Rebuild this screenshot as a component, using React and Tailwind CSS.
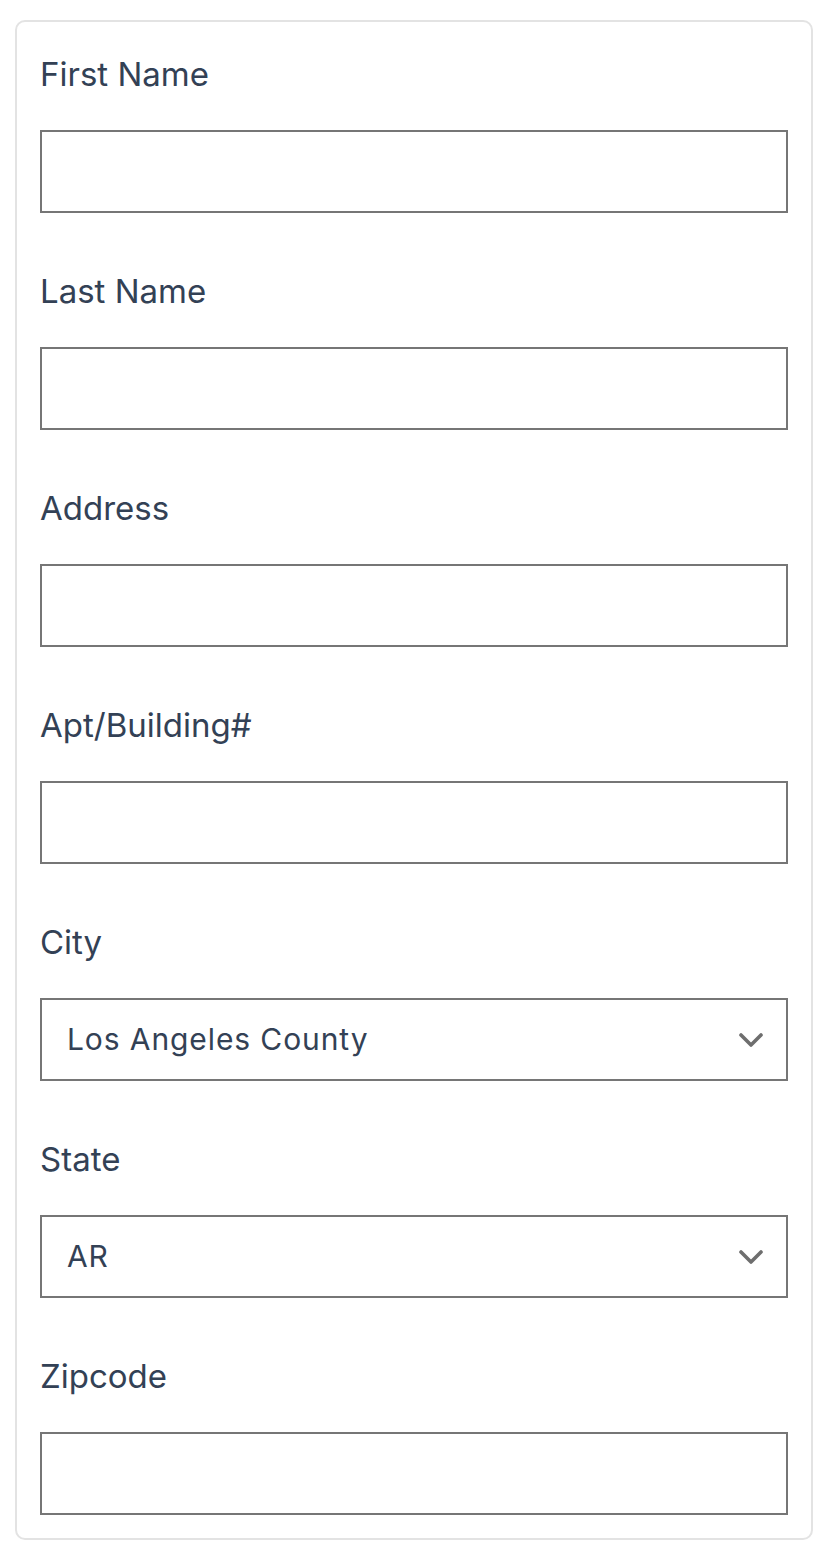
import { useState } from 'react';

const FIELDS = [
  { id: 'firstName', label: 'First Name' },
  { id: 'lastName', label: 'Last Name' },
  { id: 'address', label: 'Address' },
  { id: 'apt', label: 'Apt/Building#' },
  { id: 'city', label: 'City', options: ['Los Angeles County', 'Orange County', 'San Diego County'] },
  { id: 'state', label: 'State', options: ['AR', 'AZ', 'CA', 'NY', 'TX'] },
  { id: 'zip', label: 'Zipcode' },
];

function Chevron() {
  return (
    <svg viewBox="0 0 24 14" className="pointer-events-none absolute right-[25px] top-1/2 h-[14px] w-[24px] -translate-y-1/2" fill="none">
      <path d="M2 2l10 10L22 2" stroke="#6e6e6e" strokeWidth="3.6" strokeLinecap="round" strokeLinejoin="round" />
    </svg>
  );
}

function Field({ field, value, onChange, last }) {
  return (
    <div className={last ? '' : 'mb-[56px]'}>
      <label htmlFor={field.id} className="block text-[33px] leading-[45px] text-[#334155] mb-[33px]">
        {field.label}
      </label>
      {field.options ? (
        <div className="relative">
          <select
            id={field.id}
            value={value}
            onChange={(e) => onChange(field.id, e.target.value)}
            className="block h-[83px] w-full appearance-none rounded-none border-2 border-[#767676] bg-white pl-[25px] pr-16 text-[30px] tracking-[0.03em] text-[#334155] outline-none"
          >
            {field.options.map(o => <option key={o} value={o}>{o}</option>)}
          </select>
          <Chevron />
        </div>
      ) : (
        <input
          id={field.id}
          type="text"
          value={value}
          onChange={(e) => onChange(field.id, e.target.value)}
          className="block h-[83px] w-full rounded-none border-2 border-[#767676] bg-white px-[25px] text-[30px] text-[#334155] outline-none"
        />
      )}
    </div>
  );
}

export default function App() {
  const [values, setValues] = useState({ city: 'Los Angeles County', state: 'AR' });
  const update = (id, v) => setValues(s => ({ ...s, [id]: v }));

  return (
    <div className="min-h-screen bg-white pt-[20px] pl-[15px] pr-[17px] pb-4" style={{ fontFamily: 'Inter, "Noto Sans", sans-serif' }}>
      <form className="rounded-[10px] border-2 border-[#e3e3e3] bg-white px-[23px] pt-[30px] pb-[23px]">
        {FIELDS.map((f, i) => (
          <Field key={f.id} field={f} value={values[f.id] || ''} onChange={update} last={i === FIELDS.length - 1} />
        ))}
      </form>
    </div>
  );
}
